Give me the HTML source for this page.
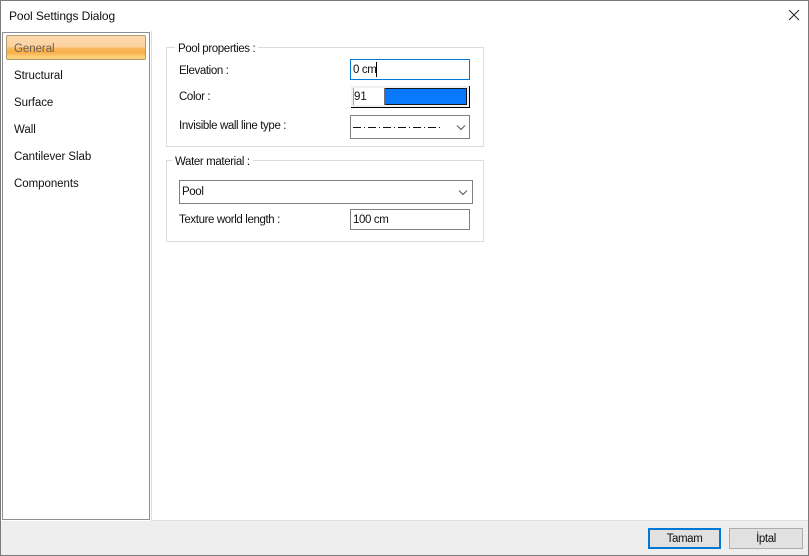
<!DOCTYPE html>
<html><head><meta charset="utf-8"><style>
html,body{margin:0;padding:0}
body{width:809px;height:556px;overflow:hidden;position:relative;background:#fff;font-family:"Liberation Sans",sans-serif;font-size:11.5px;letter-spacing:-.38px;color:#111}
div{position:absolute;box-sizing:border-box;white-space:nowrap}
.nav{left:14px;font-size:11.5px;letter-spacing:-.05px;line-height:14px;color:#111}
.lb{line-height:14px}
.box{background:#fff;border:1px solid #808080}
.grp{border:1px solid #dcdcdc}
.leg{background:#fff;padding:0 3px;line-height:14px;height:14px}
</style></head><body>
<div style="left:0;top:0;width:809px;height:556px;border:1px solid #7a7a7a"></div>
<div style="left:9px;top:9px;font-size:12px;line-height:14px;letter-spacing:-.1px;color:#101010">Pool Settings Dialog</div>
<svg style="position:absolute;left:788px;top:9px" width="12" height="12" viewBox="0 0 12 12"><path d="M1 1L11 11M11 1L1 11" stroke="#222" stroke-width="1" fill="none"/></svg>

<div style="left:151px;top:31px;width:657px;height:490px;border-left:1px solid #dedede;border-bottom:1px solid #dedede"></div>
<div style="left:1px;top:521px;width:807px;height:34px;background:#eee"></div>
<div style="left:2px;top:32px;width:148px;height:488px;background:#fff;border:1px solid #8b8f93"></div>

<div style="left:6px;top:35px;width:140px;height:25px;border:1px solid #b39a6c;border-radius:2px;background:linear-gradient(#fcd9ae 0,#fbd2a0 45%,#f9b75c 55%,#f8ae4a 72%,#fcd47f 92%,#fbc970 100%)"></div>
<div class="nav" style="top:42px;color:#6a5f55">General</div>
<div class="nav" style="top:69px">Structural</div>
<div class="nav" style="top:96px">Surface</div>
<div class="nav" style="top:123px">Wall</div>
<div class="nav" style="top:150px">Cantilever Slab</div>
<div class="nav" style="top:177px">Components</div>

<div class="grp" style="left:166px;top:47px;width:318px;height:100px"></div>
<div class="leg" style="left:175px;top:42px;width:83px">Pool properties :</div>
<div class="lb" style="left:179px;top:64px">Elevation :</div>
<div class="lb" style="left:179px;top:90px">Color :</div>
<div class="lb" style="left:179px;top:119px">Invisible wall line type :</div>

<div class="box" style="left:350px;top:59px;width:120px;height:21px;border-color:#0078d7"></div>
<div class="lb" style="left:353px;top:63px">0 cm</div>
<div style="left:376px;top:62px;width:1px;height:15px;background:#000"></div>

<div style="left:351px;top:86px;width:119px;height:22px;background:#f0f0f0;border-right:1px solid #000;border-bottom:1px solid #000"></div>
<div style="left:353px;top:88px;width:32px;height:17px;background:#fff;border-left:1px solid #a0a0a0;border-right:1px solid #707070"></div>
<div class="lb" style="left:354px;top:90px;letter-spacing:0">91</div>
<div style="left:385px;top:88px;width:82px;height:17px;background:#0a78fa;border:1px solid #101820;border-left-color:#0a78fa"></div>

<div class="box" style="left:350px;top:115px;width:120px;height:24px"></div>
<svg style="position:absolute;left:353px;top:123px" width="100" height="8" viewBox="0 0 100 8"><path d="M0 4.5H89" stroke="#111" stroke-width="1" stroke-dasharray="8 3 1 3" fill="none"/></svg>
<svg style="position:absolute;left:456px;top:124px" width="11" height="8" viewBox="0 0 11 8"><path d="M1 1.5L5 5.5L9 1.5" stroke="#555" stroke-width="1" fill="none"/></svg>

<div class="grp" style="left:166px;top:160px;width:318px;height:82px"></div>
<div class="leg" style="left:172px;top:155px;width:81px">Water material :</div>
<div class="box" style="left:179px;top:180px;width:294px;height:24px"></div>
<div class="lb" style="left:182px;top:185px">Pool</div>
<svg style="position:absolute;left:458px;top:188px" width="11" height="8" viewBox="0 0 11 8"><path d="M1 2.5L5 6.5L9 2.5" stroke="#555" stroke-width="1" fill="none"/></svg>
<div class="lb" style="left:179px;top:213px">Texture world length :</div>
<div class="box" style="left:350px;top:209px;width:120px;height:21px"></div>
<div class="lb" style="left:353px;top:213px">100 cm</div>

<div style="left:648px;top:528px;width:73px;height:21px;background:#e1e1e1;border:2px solid #0078d7;text-align:center;line-height:18px">Tamam</div>
<div style="left:729px;top:528px;width:74px;height:21px;background:#e1e1e1;border:1px solid #adadad;text-align:center;line-height:20px">İptal</div>
</body></html>
